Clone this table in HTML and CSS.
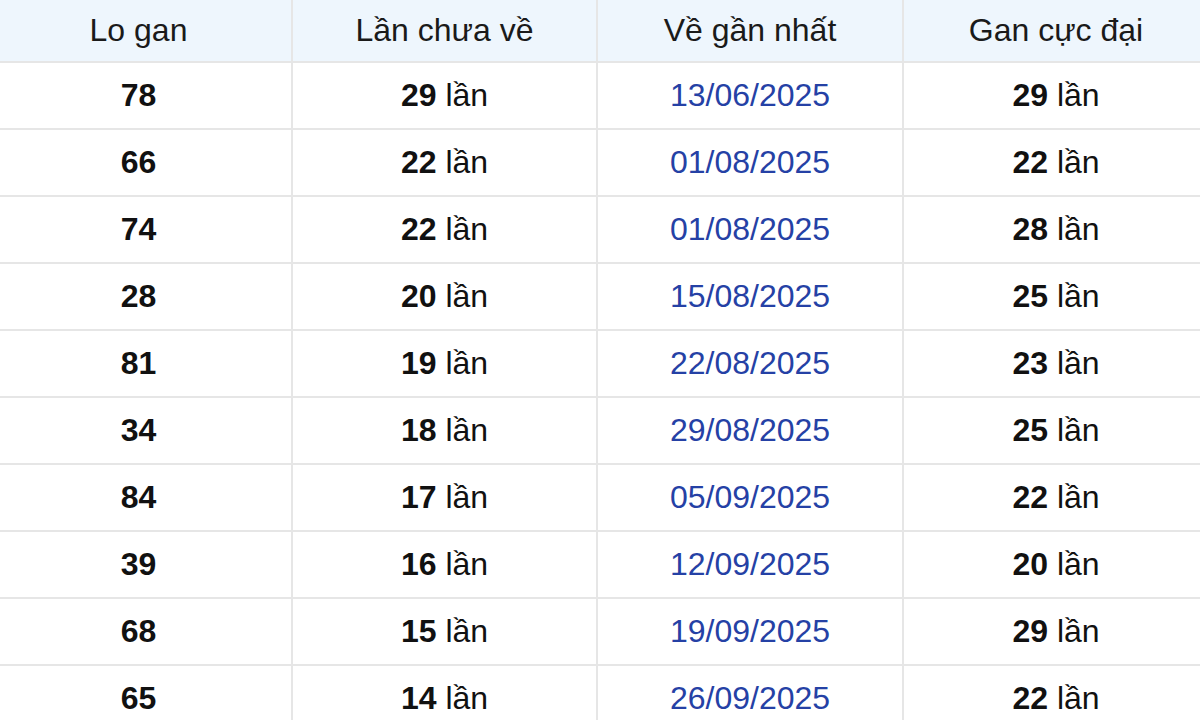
FILE: index.html
```html
<!DOCTYPE html>
<html lang="vi">
<head>
<meta charset="utf-8">
<link rel="stylesheet" href="styles.css">
</head>
<body>
<table class="gan">
  <colgroup>
    <col class="c1"><col class="c2"><col class="c3"><col class="c4">
  </colgroup>
  <thead>
    <tr><th>Lo gan</th><th>Lần chưa về</th><th>Về gần nhất</th><th>Gan cực đại</th></tr>
  </thead>
  <tbody>
    <tr><td><b>78</b></td><td><b>29</b> lần</td><td class="date">13/06/2025</td><td><b>29</b> lần</td></tr>
    <tr><td><b>66</b></td><td><b>22</b> lần</td><td class="date">01/08/2025</td><td><b>22</b> lần</td></tr>
    <tr><td><b>74</b></td><td><b>22</b> lần</td><td class="date">01/08/2025</td><td><b>28</b> lần</td></tr>
    <tr><td><b>28</b></td><td><b>20</b> lần</td><td class="date">15/08/2025</td><td><b>25</b> lần</td></tr>
    <tr><td><b>81</b></td><td><b>19</b> lần</td><td class="date">22/08/2025</td><td><b>23</b> lần</td></tr>
    <tr><td><b>34</b></td><td><b>18</b> lần</td><td class="date">29/08/2025</td><td><b>25</b> lần</td></tr>
    <tr><td><b>84</b></td><td><b>17</b> lần</td><td class="date">05/09/2025</td><td><b>22</b> lần</td></tr>
    <tr><td><b>39</b></td><td><b>16</b> lần</td><td class="date">12/09/2025</td><td><b>20</b> lần</td></tr>
    <tr><td><b>68</b></td><td><b>15</b> lần</td><td class="date">19/09/2025</td><td><b>29</b> lần</td></tr>
    <tr><td><b>65</b></td><td><b>14</b> lần</td><td class="date">26/09/2025</td><td><b>22</b> lần</td></tr>
  </tbody>
</table>
</body>
</html>
```
FILE: styles.css
```css
html, body {
  margin: 0;
  padding: 0;
  background: #ffffff;
  overflow: hidden;
}
body {
  font-family: "Liberation Sans", Arial, sans-serif;
  color: #111111;
  width: 1200px;
}
.gan {
  width: 1222px;
  margin-left: -14px;
  border-collapse: collapse;
  table-layout: fixed;
}
.c1 { width: 306px; }
.c2 { width: 305px; }
.c3 { width: 306px; }
.c4 { width: 305px; }
.gan th,
.gan td {
  text-align: center;
  font-size: 32px;
  padding: 0;
  border-left: 2px solid #e6e6e6;
  border-bottom: 2px solid #e6e6e6;
}
.gan th:first-child,
.gan td:first-child {
  border-left: none;
}
.gan th {
  height: 61px;
  font-weight: normal;
  background: #eef6fd;
  color: #1a1a1a;
}
.gan td {
  height: 65px;
  color: #111111;
}
.gan td b {
  font-weight: bold;
}
.gan td.date {
  color: #2541a5;
}
```
